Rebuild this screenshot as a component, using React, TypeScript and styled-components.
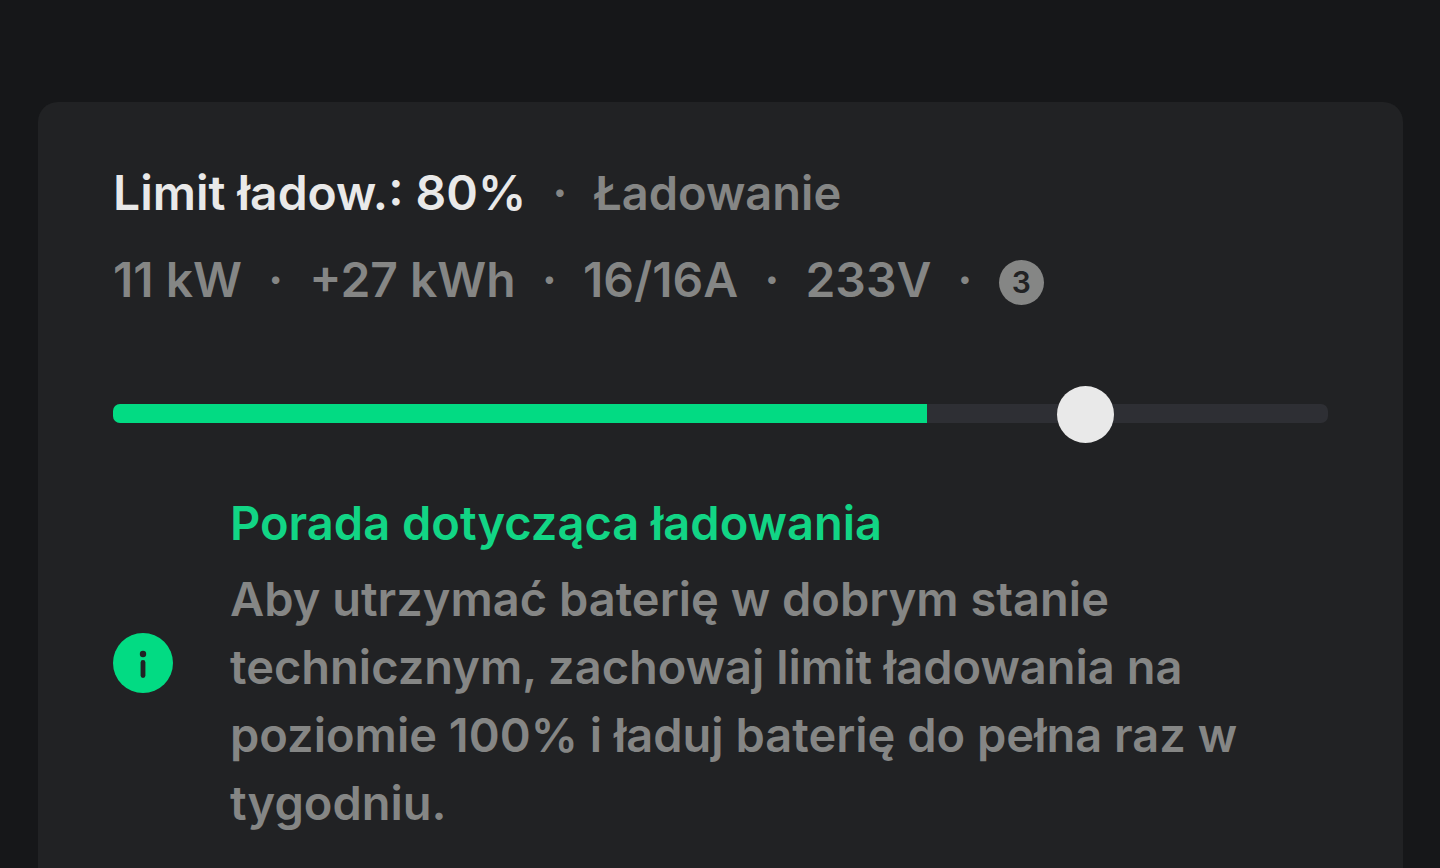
import React, { useState } from "react";
import styled, { createGlobalStyle } from "styled-components";

const color = {
  page: "#161719",
  card: "#212224",
  track: "#2e2f34",
  green: "#02db83",
  title: "#12d585",
  white: "#e9e9e9",
  grey: "#858685",
};

const GlobalStyle = createGlobalStyle`
  *, *::before, *::after { box-sizing: border-box; }
  body {
    margin: 0;
    background: ${color.page};
    color: ${color.grey};
    font-family: Inter, "Noto Sans", sans-serif;
    font-size: 47px;
    font-weight: 600;
    line-height: 68px;
  }
`;

const Page = styled.main`
  display: flex;
  flex-direction: column;
  min-height: 100vh;
  padding: 102px 37px 0 38px;
`;

const Card = styled.section`
  flex: 1;
  padding: 57px 75px 24px;
  background: ${color.card};
  border-radius: 20px 20px 0 0;
`;

const StatusRow = styled.div`
  display: flex;
  flex-wrap: wrap;
  align-items: center;
  gap: 0 26px;
  font-size: 48px;

  & + & {
    margin-top: 19px;
  }
`;

const Limit = styled.label`
  color: ${color.white};
`;

const State = styled.span`
  font-size: 47px;
`;

const PhaseBadge = styled.span`
  display: grid;
  place-items: center;
  width: 45px;
  height: 45px;
  margin-top: 5px;
  border-radius: 50%;
  background: ${color.grey};
  color: ${color.card};
  font-size: 30px;
  line-height: 45px;
`;

const SliderBox = styled.div`
  display: grid;
  align-items: center;
  margin-top: 72px;

  & > * {
    grid-area: 1 / 1;
  }
`;

const Track = styled.div`
  height: 19px;
  margin-bottom: 2px;
  overflow: hidden;
  border-radius: 7px;
  background: ${color.track};
`;

const Fill = styled.div`
  height: 100%;
  background: ${color.green};
`;

/* The input reaches half a thumb past both track ends, so that the thumb's
   centre marks the value. */
const Range = styled.input`
  appearance: none;
  width: calc(100% + 57px);
  height: 57px;
  margin: 0 -28px;
  background: transparent;
  cursor: pointer;

  &::-webkit-slider-runnable-track {
    height: 57px;
    background: transparent;
  }

  &::-webkit-slider-thumb {
    appearance: none;
    width: 57px;
    height: 57px;
    border: 0;
    border-radius: 50%;
    background: ${color.white};
  }
`;

const Tip = styled.article`
  display: flex;
  align-items: center;
  gap: 57px;
  margin-top: 46px;
`;

const InfoIcon = styled.svg`
  flex: none;
  width: 60px;
  height: 60px;
`;

const TipTitle = styled.h2`
  margin: 0 0 8px;
  color: ${color.title};
  font-size: 47px;
  font-weight: 600;
`;

const TipText = styled.p`
  margin: 0;
`;

const charge = 67;

const readings = ["11 kW", "+27 kWh", "16/16A", "233V"];

export default function App() {
  const [limit, setLimit] = useState(80);

  return (
    <>
      <GlobalStyle />
      <Page>
        <Card>
          <StatusRow>
            <Limit htmlFor="limit">Limit ładow.: {limit}%</Limit>
            <span>·</span>
            <State>Ładowanie</State>
          </StatusRow>
          <StatusRow>
            {readings.map((reading) => (
              <React.Fragment key={reading}>
                <span>{reading}</span>
                <span>·</span>
              </React.Fragment>
            ))}
            <PhaseBadge>3</PhaseBadge>
          </StatusRow>

          <SliderBox>
            <Track>
              <Fill style={{ width: `${charge}%` }} />
            </Track>
            <Range
              id="limit"
              type="range"
              min={0}
              max={100}
              value={limit}
              onChange={(e) => setLimit(Number(e.target.value))}
            />
          </SliderBox>

          <Tip>
            <InfoIcon viewBox="0 0 60 60" aria-hidden="true">
              <circle cx="30" cy="30" r="30" fill={color.green} />
              <circle cx="30" cy="21" r="3.2" fill={color.card} />
              <rect x="27.6" y="27" width="4.8" height="18" rx="2.4" fill={color.card} />
            </InfoIcon>
            <div>
              <TipTitle>Porada dotycząca ładowania</TipTitle>
              <TipText>
                Aby utrzymać baterię w dobrym stanie technicznym, zachowaj limit
                ładowania na poziomie 100% i ładuj baterię do pełna raz w tygodniu.
              </TipText>
            </div>
          </Tip>
        </Card>
      </Page>
    </>
  );
}
